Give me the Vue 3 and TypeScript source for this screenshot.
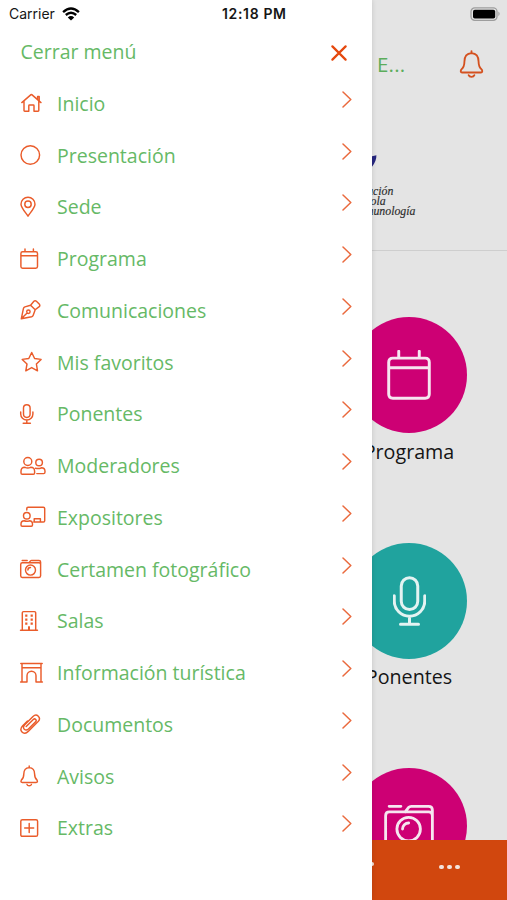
<script setup lang="ts">
interface Shape {
  d: string
  dots?: string
}

interface MenuEntry {
  label: string
  icon: string
}

interface Tile {
  label: string
  icon: string
  tone: 'magenta' | 'teal'
  box: string
  width: number
  height: number
}

const shapes: Record<string, Shape> = {
  home: { d: 'M2.8 11.6 12 3.6Q12.4 3.3 12.8 3.6L22 11.6M5 10V19.5Q5 20.2 5.7 20.2H9.8V14.7Q9.8 14 10.5 14H14.3Q15 14 15 14.7V20.2H19.1Q19.8 20.2 19.8 19.5V10M18.6 8.2V5.5H20.2V9.6' },
  circle: { d: 'M2 12a9.3 9.3 0 1 0 18.6 0a9.3 9.3 0 1 0-18.6 0Z' },
  pin: { d: 'M9 21.2C7.8 19 2 12.8 2 9.2a7 7 0 0 1 14 0C16 12.8 10.2 19 9 21.2ZM5.8 9.2a3.2 3.2 0 1 0 6.4 0a3.2 3.2 0 1 0-6.4 0Z' },
  calendar: { d: 'M3.6 4.8H16.8Q18.5 4.8 18.5 6.5V19.5Q18.5 21.2 16.8 21.2H3.6Q1.9 21.2 1.9 19.5V6.5Q1.9 4.8 3.6 4.8ZM1.9 8.7H18.5M6 2V4.8M14.4 2V4.8' },
  pen: { d: 'M2.3 20.8 4.4 10.6Q4.7 9.3 5.9 8.9L11.6 7.2 16.2 11.8 14.2 17.2Q13.8 18.3 12.6 18.7ZM2.5 20.5 8.1 14.9M7.7 13.7a1.7 1.7 0 1 0 3.4 0a1.7 1.7 0 1 0-3.4 0ZM11.6 7.2 14.9 3.3Q16.1 2 17.4 3.3L20.2 6.1Q21.5 7.4 20.2 8.6L16.2 11.8' },
  star: { d: 'M12.7 2.5 15.6 8.5 22.1 9.4 17.4 14 18.5 20.8 12.7 17.6 6.8 20.8 8 14 3.2 9.4 9.8 8.5Z' },
  mic: { d: 'M4.5 6A3.3 3.3 0 0 1 11.1 6V12.1A3.3 3.3 0 0 1 4.5 12.1ZM1.7 9.9V12A6.1 6.1 0 0 0 13.9 12V9.9M7.8 18.1V21.3M4.2 21.3H11.4' },
  users: { d: 'M4.8 7.5a4 4 0 1 0 8 0a4 4 0 1 0-8 0ZM6 13.3Q2 13.3 2 17.3V18.9Q2 20.2 3.3 20.2H14.3Q15.6 20.2 15.6 18.9V17.3Q15.6 13.3 11.6 13.3Q8.8 14.5 6 13.3ZM16.8 8.5a3.3 3.3 0 1 0 6.6 0a3.3 3.3 0 1 0-6.6 0ZM16.5 14.3Q20.1 15 22.3 13.8Q26 13.8 26 17.4V18Q26 19.6 24.6 19.6H17.8' },
  board: { d: 'M7.8 5V3.5Q7.8 2.3 9 2.3H24.4Q25.7 2.3 25.7 3.5V15.7Q25.7 17 24.4 17H14.7M15.2 16.8V13.7H21.4V16.8M4.5 10.7a3.3 3.3 0 1 0 6.6 0a3.3 3.3 0 1 0-6.6 0ZM5.2 15.8Q2 15.8 2 19.2V20Q2 21.2 3.2 21.2H12.3Q13.5 21.2 13.5 20V19.2Q13.5 15.8 10.3 15.8Q7.8 16.8 5.2 15.8Z' },
  camera: { d: 'M3.3 5.8H20Q21.6 5.8 21.6 7.4V18.8Q21.6 20.4 20 20.4H3.3Q1.7 20.4 1.7 18.8V7.4Q1.7 5.8 3.3 5.8ZM3.2 3.4H8.2M10 5.8 11.5 3.9Q11.9 3.4 12.6 3.4H20Q21.6 3.4 21.6 5V7.4M6.5 13.1a5 5 0 1 0 10 0a5 5 0 1 0-10 0ZM8.9 13.1A2.6 2.6 0 0 1 11.5 10.5' },
  building: {
    d: 'M3.3 21V3.8Q3.3 2.6 4.5 2.6H15.5Q16.7 2.6 16.7 3.8V21M1.5 21.3H18.5M10 18V21',
    dots: 'M6.2 5.6H8.4V7.8H6.2ZM11.6 5.6H13.8V7.8H11.6ZM6.2 9.6H8.4V11.8H6.2ZM11.6 9.6H13.8V11.8H11.6ZM6.2 13.6H8.4V15.8H6.2ZM11.6 13.6H13.8V15.8H11.6ZM9 17.6H11V21H9Z',
  },
  arch: { d: 'M1.8 2.4H23.2M3 2.4V20.5M22 2.4V20.5M3 6.7H22M1.6 21H8V14.7A4.5 4.5 0 0 1 17 14.7V21H23.4' },
  clip: { d: 'M7.2 14.6 14.3 7.5Q15.6 6.3 16.7 7.4Q17.8 8.6 16.6 9.8L9.4 17Q7.2 19 5.3 17.2Q3.5 15.3 5.5 13.1L14 4.5Q16.8 1.8 19.3 4.2Q21.8 6.8 19.1 9.6L9.2 19.4Q5.6 22.8 3 20Q.4 17.2 3.7 13.8L8.5 9' },
  bell: { d: 'M10.2 2V3.6M10.2 3.6Q4.8 4 4.8 10Q4.8 14.3 2.3 16.2Q1.4 18.3 3 18.4H17.4Q19 18.3 18.1 16.2Q15.6 14.3 15.6 10Q15.6 4 10.2 3.6ZM8 20.4Q8.5 21.7 10.2 21.7Q11.9 21.7 12.4 20.4' },
  plus: { d: 'M3.4 3.7H17Q18.6 3.7 18.6 5.3V18.7Q18.6 20.3 17 20.3H3.4Q1.8 20.3 1.8 18.7V5.3Q1.8 3.7 3.4 3.7ZM10.2 7.5V16.5M5.7 12H14.7' },
}

const entries: MenuEntry[] = [
  { label: 'Inicio', icon: 'home' },
  { label: 'Presentación', icon: 'circle' },
  { label: 'Sede', icon: 'pin' },
  { label: 'Programa', icon: 'calendar' },
  { label: 'Comunicaciones', icon: 'pen' },
  { label: 'Mis favoritos', icon: 'star' },
  { label: 'Ponentes', icon: 'mic' },
  { label: 'Moderadores', icon: 'users' },
  { label: 'Expositores', icon: 'board' },
  { label: 'Certamen fotográfico', icon: 'camera' },
  { label: 'Salas', icon: 'building' },
  { label: 'Información turística', icon: 'arch' },
  { label: 'Documentos', icon: 'clip' },
  { label: 'Avisos', icon: 'bell' },
  { label: 'Extras', icon: 'plus' },
]

const tiles: Tile[] = [
  { label: 'Programa', icon: 'calendar', tone: 'magenta', box: '1.2 1.5 18 20.4', width: 44, height: 50 },
  { label: 'Ponentes', icon: 'mic', tone: 'teal', box: '1.2 2 13.2 20', width: 33, height: 50 },
  { label: '', icon: 'camera', tone: 'magenta', box: '1.1 2 21.1 20', width: 50, height: 47 },
]
</script>

<template>
  <div class="screen">
    <main class="page">
      <header class="topbar">
        <span class="title">E...</span>
        <svg class="alert" viewBox="0.9 1.2 18.6 21.4"><path :d="shapes.bell.d" /></svg>
      </header>
      <section class="brand">
        <svg class="swoosh" viewBox="0 0 8 12"><path d="M2 1.5 7.4 0.3Q7.6 6 3 11.7L0 11.5Q3 6 2 1.5Z" /></svg>
        <p>Asociación<br />Española<br />de Inmunología</p>
      </section>
      <section class="tiles">
        <article v-for="(tile, i) in tiles" :key="i" class="tile">
          <div class="disc" :class="tile.tone">
            <svg :viewBox="tile.box" :width="tile.width" :height="tile.height">
              <path :d="shapes[tile.icon].d" />
            </svg>
          </div>
          <span>{{ tile.label }}</span>
        </article>
      </section>
      <footer class="tabbar">
        <i class="edge"></i>
        <div class="more"><i></i><i></i><i></i></div>
      </footer>
    </main>

    <aside class="drawer">
      <div class="close-row">
        <span>Cerrar menú</span>
        <svg class="close" viewBox="0 0 16 16"><path d="M1.4 1.4 14.6 14.6M14.6 1.4 1.4 14.6" /></svg>
      </div>
      <nav>
        <a v-for="entry in entries" :key="entry.label" class="entry">
          <svg class="icon" viewBox="0 0 28 24">
            <path :d="shapes[entry.icon].d" />
            <path v-if="shapes[entry.icon].dots" class="dots" :d="shapes[entry.icon].dots" />
          </svg>
          <span>{{ entry.label }}</span>
          <svg class="chevron" viewBox="0 0 10 17"><path d="M1 1 8.8 8.5 1 16" /></svg>
        </a>
      </nav>
    </aside>

    <div class="status">
      <span class="carrier">Carrier</span>
      <svg class="wifi" viewBox="0 0 18 14">
        <path d="M1.1 5.1Q9-2 16.9 5.1M3.8 8Q9 3.5 14.2 8" />
        <path class="tip" d="M9 13.6 5.8 10.4Q9 7.6 12.2 10.4Z" />
      </svg>
      <span class="time">12:18 PM</span>
      <svg class="battery" viewBox="0 0 31 14">
        <rect class="shell" x="1" y="0.9" width="26" height="12.4" rx="3.7" />
        <rect x="3" y="2.8" width="22.2" height="8.7" rx="1.8" />
        <path class="nub" d="M28.4 4.6Q30.8 6.8 28.4 9.2Z" />
      </svg>
    </div>
  </div>
</template>

<style>
body {
  margin: 0;
}
</style>

<style scoped>
.screen {
  position: relative;
  width: 507px;
  height: 900px;
  overflow: hidden;
  font-family: 'Open Sans', 'Noto Sans', sans-serif;
  background: #e4e4e4;
}
svg {
  display: block;
  flex: none;
}
svg path {
  fill: none;
  stroke: currentColor;
  stroke-linecap: round;
  stroke-linejoin: round;
}
.page {
  box-sizing: border-box;
  display: flex;
  flex-direction: column;
  height: 900px;
  padding-top: 28px;
}
.topbar {
  box-sizing: border-box;
  display: flex;
  flex: none;
  justify-content: space-between;
  align-items: center;
  height: 72px;
  padding: 0 23px 0 377px;
}
.title {
  font-size: 20.5px;
  line-height: 28px;
  color: #5cad5b;
  letter-spacing: 0.2px;
}
.alert {
  width: 25px;
  height: 28px;
  color: #d4511f;
  stroke-width: 1.4;
}
.brand {
  box-sizing: border-box;
  flex: none;
  height: 151px;
  padding: 55px 0 0 341px;
  border-bottom: 1px solid #cecece;
}
.swoosh {
  width: 8px;
  height: 12px;
  margin-left: 27.5px;
  color: #27277f;
}
.swoosh path {
  fill: currentColor;
  stroke: none;
}
.brand p {
  margin: 19px 0 0;
  font: italic 11.8px/10px 'Liberation Serif', serif;
  color: #2c2c2c;
  -webkit-text-stroke: 0.15px #2c2c2c;
}
.tiles {
  flex: 1;
  min-height: 0;
  overflow: hidden;
  padding: 66px 0 0 311.5px;
}
.tile {
  display: flex;
  flex-direction: column;
  align-items: center;
  width: 195px;
  height: 225.5px;
}
.disc {
  display: flex;
  flex: none;
  align-items: center;
  justify-content: center;
  width: 116px;
  height: 116px;
  border-radius: 50%;
  color: #f6e6f0;
  stroke-width: 1.2;
}
.magenta {
  background: #cd0074;
}
.teal {
  background: #20a39e;
  color: #e4f3f2;
}
.tile span {
  margin-top: 4.5px;
  font-size: 19.7px;
  line-height: 28px;
  color: #151515;
}
.tabbar {
  display: flex;
  flex: none;
  align-items: center;
  justify-content: space-between;
  box-sizing: border-box;
  height: 60px;
  padding: 0 47px 6px 370px;
  background: #d1470e;
}
.edge {
  width: 4px;
  height: 4px;
  margin-bottom: 6px;
  border-radius: 50%;
  background: #f4e4dd;
}
.more {
  display: flex;
  gap: 3.4px;
}
.more i {
  width: 4.8px;
  height: 4.8px;
  border-radius: 50%;
  background: #f4e4dd;
}
.drawer {
  position: absolute;
  top: 0;
  left: 0;
  box-sizing: border-box;
  width: 372px;
  height: 900px;
  padding-top: 28px;
  background: #fff;
  box-shadow: 0 0 5px rgba(0, 0, 0, 0.14);
  font-size: 19.5px;
  color: #66b966;
}
.close-row {
  display: flex;
  align-items: center;
  justify-content: space-between;
  height: 49.4px;
  padding: 0 25px 0 20.5px;
}
.close-row span {
  position: relative;
  top: -1.5px;
}
.close {
  width: 16px;
  height: 16px;
  color: #e5480d;
  stroke-width: 2.2;
}
.entry {
  display: flex;
  align-items: center;
  height: 51.75px;
  padding: 0 20px 0 19px;
}
.icon {
  width: 28px;
  height: 24px;
  margin-right: 10px;
  color: #ea5c2b;
  stroke-width: 1.45;
}
.icon .dots {
  fill: currentColor;
  stroke: none;
}
.chevron {
  width: 10px;
  height: 17px;
  margin: 0 0 8px auto;
  color: #ea6a3e;
  stroke-width: 1.5;
}
.status {
  position: absolute;
  top: 0;
  left: 0;
  box-sizing: border-box;
  display: flex;
  align-items: center;
  width: 507px;
  height: 27px;
  padding: 0 6px 0 9px;
  font-family: Inter, sans-serif;
  font-size: 14px;
  color: #161616;
}
.carrier {
  width: 53px;
}
.wifi {
  width: 18px;
  height: 14px;
  color: #000;
  stroke-width: 2.4;
}
.wifi path {
  stroke-linecap: butt;
}
.wifi .tip {
  fill: #000;
  stroke: none;
}
.time {
  margin-left: 142px;
  font-weight: 600;
  letter-spacing: 0.65px;
}
.battery {
  width: 31px;
  height: 14px;
  margin-left: auto;
}
.battery .shell {
  fill: none;
  stroke: #9d9d9d;
  stroke-width: 1.3;
}
.battery .nub {
  fill: #9d9d9d;
  stroke: none;
}
</style>
